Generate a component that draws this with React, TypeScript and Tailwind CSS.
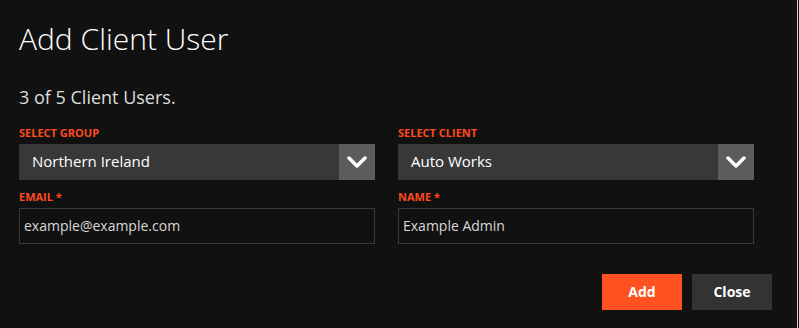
function Chevron() {
  return (
    <svg width="20" height="12" viewBox="0 0 20 12" fill="none">
      <polyline points="2,2 10,10 18,2" stroke="#fff" strokeWidth="3.5" strokeLinecap="round" strokeLinejoin="round" />
    </svg>
  );
}

function Label({ children }: { children: React.ReactNode }) {
  return (
    <div className="text-[11px] leading-4 font-bold uppercase text-[#ff4a1c]">{children}</div>
  );
}

function Select({ value }: { value: string }) {
  return (
    <div className="mt-[3px] flex h-9 bg-[#383838]">
      <div className="flex flex-1 items-center pl-[13px] pb-[2px] text-[15px] text-white">{value}</div>
      <div className="flex w-9 items-center justify-center bg-[#5c5c5c]">
        <Chevron />
      </div>
    </div>
  );
}

function Input({ value }: { value: string }) {
  return (
    <div className="mt-[3px] flex h-9 items-center border border-[#3a3a3a] pl-1 text-sm text-[#d8d8d8]">
      {value}
    </div>
  );
}

export default function App() {
  return (
    <div className="flex min-h-screen bg-[#111111]" style={{ fontFamily: '"Open Sans", sans-serif' }}>
      <div className="w-[798px] border-r border-[#d0d0d0] pl-[19px] pr-[25px]">
        <h1 className="mt-[21px] text-[30px] leading-9 font-light text-white">Add Client User</h1>
        <p className="mt-7 text-[18px] leading-6 text-[#dddddd]">3 of 5 Client Users.</p>

        <div className="mt-4 grid grid-cols-[356px_356px] gap-x-[23px]">
          <div>
            <Label>Select Group</Label>
            <Select value="Northern Ireland" />
          </div>
          <div>
            <Label>Select Client</Label>
            <Select value="Auto Works" />
          </div>
          <div className="mt-[9px]">
            <Label>Email *</Label>
            <Input value="example@example.com" />
          </div>
          <div className="mt-[9px]">
            <Label>Name *</Label>
            <Input value="Example Admin" />
          </div>
        </div>

        <div className="mt-[30px] flex justify-end gap-[10px]">
          <button className="h-9 w-20 bg-[#ff5220] text-sm font-bold text-white">Add</button>
          <button className="h-9 w-20 bg-[#333333] text-sm font-bold text-white">Close</button>
        </div>
      </div>
    </div>
  );
}
